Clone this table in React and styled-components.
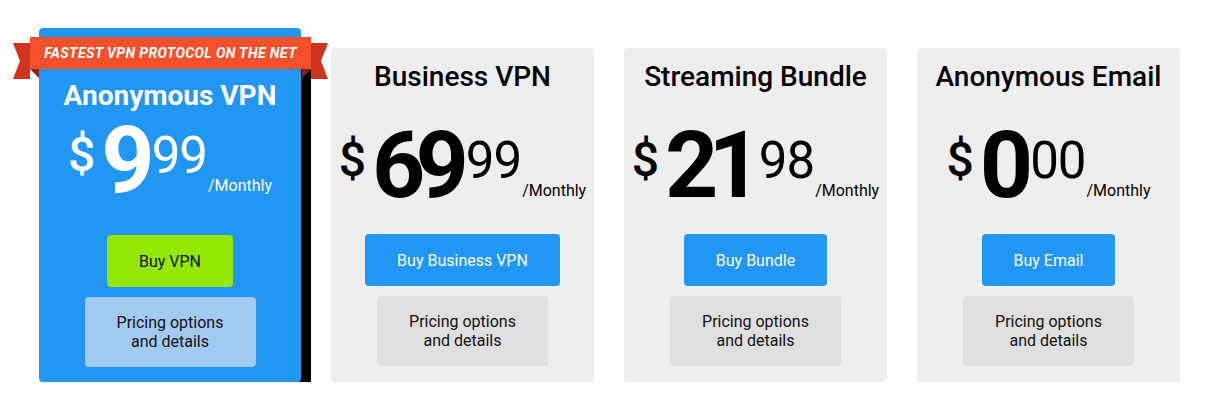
import React from 'react';
import styled, { createGlobalStyle } from 'styled-components';

const GlobalStyle = createGlobalStyle`
  html, body {
    margin: 0;
    padding: 0;
    background: #fff;
    font-family: Roboto, "Liberation Sans", sans-serif;
  }
`;

const Page = styled.div`
  display: flex;
  align-items: flex-end;
  gap: 30px;
  padding: 28px 0 0 39px;
`;

const Card = styled.div`
  position: relative;
  width: ${p => (p.$featured ? 262 : 263)}px;
  height: ${p => (p.$featured ? 354 : 334)}px;
  box-sizing: border-box;
  padding-top: ${p => (p.$featured ? 51 : 12)}px;
  display: flex;
  flex-direction: column;
  align-items: center;
  border-radius: 4px;
  background: ${p => (p.$featured ? '#2196f3' : '#eeeeee')};
  color: ${p => (p.$featured ? '#fff' : '#000')};
  box-shadow: ${p => (p.$featured ? '10px 10px 0 #000' : 'none')};
`;

const Ribbon = styled.div`
  position: absolute;
  left: -26px;
  top: 9px;
  width: 315px;
  height: 42px;
`;

const RibbonLabel = styled.span`
  position: absolute;
  left: 17px;
  top: 0;
  width: 281px;
  height: 32px;
  display: flex;
  align-items: center;
  justify-content: center;
  font-size: 14px;
  font-weight: 700;
  font-style: italic;
  color: #fff;
  letter-spacing: 0.4px;
`;

const Title = styled.h2`
  margin: 0;
  font-size: 28px;
  font-weight: ${p => (p.$featured ? 700 : 500)};
  line-height: 33px;
`;

const Price = styled.div`
  display: flex;
  align-items: flex-start;
  margin-top: ${p => (p.$featured ? 2 : 26)}px;
  line-height: 1;
`;

const Currency = styled.span`
  font-size: 48px;
  font-weight: 500;
  margin-top: 17px;
  margin-right: 6px;
`;

const Whole = styled.span`
  font-size: 93px;
  font-weight: 700;
  letter-spacing: -10px;
`;

const Cents = styled.span`
  font-size: 51px;
  letter-spacing: -1px;
  margin-top: 16px;
  margin-left: 7px;
`;

const Period = styled.span`
  font-size: 16px;
  margin-top: 64px;
  margin-left: 1px;
`;

const BuyButton = styled.button`
  margin-top: ${p => (p.$featured ? 28 : 22)}px;
  height: 52px;
  padding: 0 32px;
  border: none;
  border-radius: 4px;
  font-family: inherit;
  font-size: 16px;
  background: ${p => (p.$featured ? '#94e800' : '#2196f3')};
  color: ${p => (p.$featured ? '#111' : '#fff')};
`;

const Details = styled.div`
  margin-top: 10px;
  width: 171px;
  height: 70px;
  display: flex;
  align-items: center;
  justify-content: center;
  text-align: center;
  border-radius: 4px;
  font-size: 16px;
  line-height: 19px;
  color: #111;
  background: ${p => (p.$featured ? '#a3caf3' : '#e0e0e0')};
`;

const RibbonShape = () => (
  <svg width="315" height="42" viewBox="0 0 315 42" style={{ display: 'block' }}>
    <polygon points="0,6 17,6 17,42 0,42 7,24" fill="#cf3421" />
    <polygon points="315,6 298,6 298,42 315,42 308,24" fill="#cf3421" />
    <polygon points="17,32 26,32 26,41" fill="#8e1c10" />
    <polygon points="298,32 289,32 289,41" fill="#8e1c10" />
    <rect x="17" y="0" width="281" height="32" fill="#f4502b" />
  </svg>
);

const plans = [
  { title: 'Anonymous VPN', whole: '9', cents: '99', buy: 'Buy VPN', featured: true },
  { title: 'Business VPN', whole: '69', cents: '99', buy: 'Buy Business VPN' },
  { title: 'Streaming Bundle', whole: '21', cents: '98', buy: 'Buy Bundle' },
  { title: 'Anonymous Email', whole: '0', cents: '00', buy: 'Buy Email' },
];

export default function App() {
  return (
    <>
      <GlobalStyle />
      <Page>
        {plans.map(p => (
          <Card key={p.title} $featured={p.featured}>
            {p.featured && (
              <Ribbon>
                <RibbonShape />
                <RibbonLabel>FASTEST VPN PROTOCOL ON THE NET</RibbonLabel>
              </Ribbon>
            )}
            <Title $featured={p.featured}>{p.title}</Title>
            <Price $featured={p.featured}>
              <Currency>$</Currency>
              <Whole>{p.whole}</Whole>
              <Cents>{p.cents}</Cents>
              <Period>/Monthly</Period>
            </Price>
            <BuyButton $featured={p.featured}>{p.buy}</BuyButton>
            <Details $featured={p.featured}>
              Pricing options<br />and details
            </Details>
          </Card>
        ))}
      </Page>
    </>
  );
}
